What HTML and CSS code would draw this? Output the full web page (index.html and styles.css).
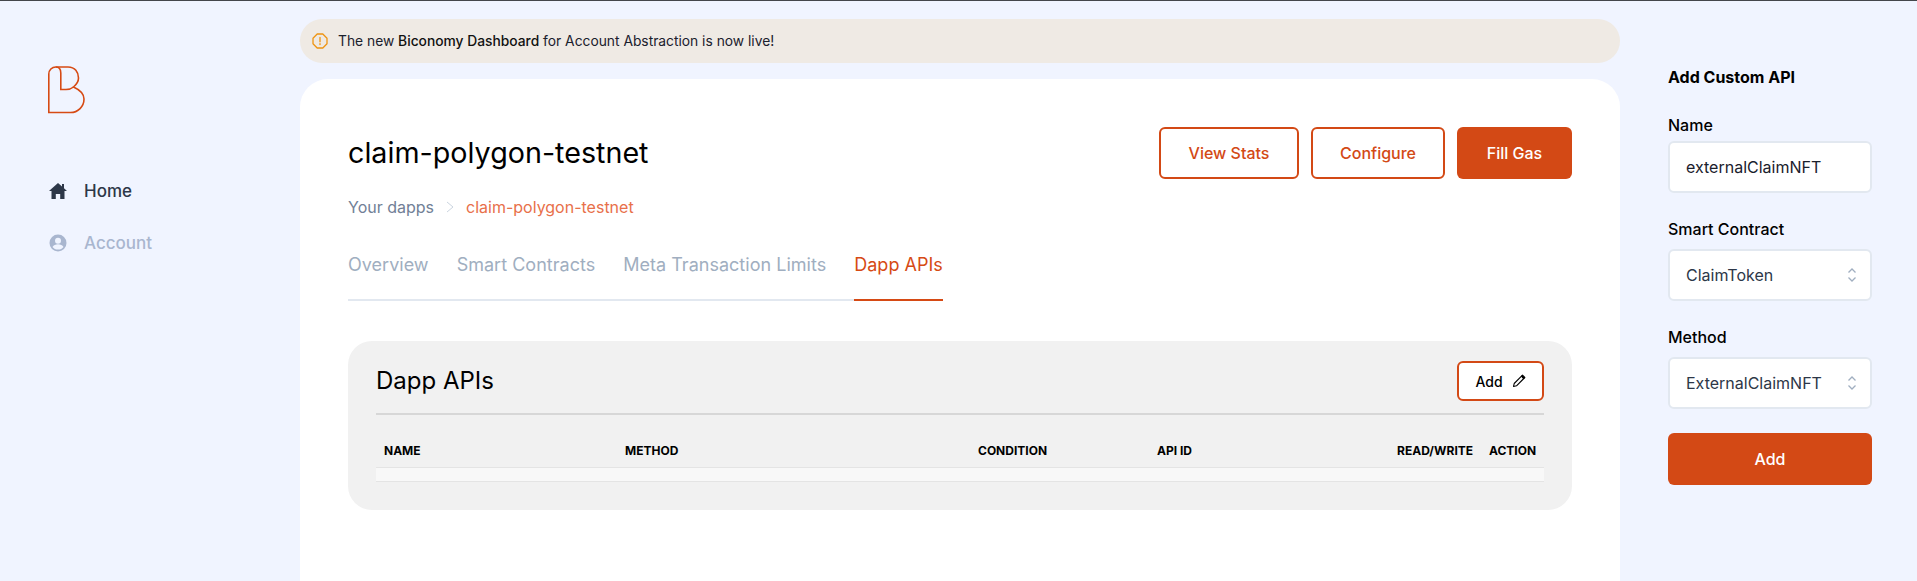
FILE: index.html
```html
<!DOCTYPE html>
<html lang="en">
<head>
<meta charset="utf-8">
<title>claim-polygon-testnet</title>
<link rel="stylesheet" href="styles.css">
</head>
<body>
<div class="app">
  <aside class="sidebar">
    <svg class="logo" width="37" height="48" viewBox="0 0 37 48" fill="none" stroke="#d64a14" stroke-width="1.600">
      <path d="M.8 46.500V8A7 7 0 0 1 7.800 1H20C27 1 30.500 6 30.500 12c0 3.500-1.700 6.200-5 9 5.500 2.500 10.500 6 10.500 12 0 7.500-6 13.500-13.500 13.500z"/>
      <path d="M7.800 1c3.500 0 5 2.500 5 6v16.500H18c3 0 5.500-.8 7.500-2.500"/>
    </svg>
    <nav class="nav">
      <a class="nav-item active">
        <svg width="18" height="16" viewBox="0 0 18 16"><path fill="#2d3748" d="M9 0 0 8h2.500v8h4.300v-5h4.400v5h4.300V8H18L15 5.300V1h-2v2.500z"/></svg>
        <span>Home</span>
      </a>
      <a class="nav-item">
        <svg width="18" height="18" viewBox="0 0 18 18"><circle cx="9" cy="9" r="8.500" fill="#a9b6cf"/><circle cx="9" cy="6.800" r="3" fill="#f0f4ff"/><path fill="#f0f4ff" d="M3.500 13c1-2 3-2.800 5.500-2.800s4.500.8 5.500 2.800c-1.200 1.600-3.200 2.600-5.500 2.600S4.700 14.600 3.500 13z"/></svg>
        <span>Account</span>
      </a>
    </nav>
  </aside>

  <main class="main">
    <div class="banner">
      <svg width="16" height="16" viewBox="0 0 16 16" fill="none" stroke="#ee9412" stroke-width="1.300"><path d="M5.200 1h5.600L15 5.200v5.600L10.800 15H5.200L1 10.800V5.200z" stroke-linejoin="round"/><path d="M8 4.500v4.300M8 10.700v.9" stroke-linecap="round"/></svg>
      <p>The new <strong>Biconomy Dashboard</strong> for Account Abstraction is now live!</p>
    </div>
    <section class="card">
      <header class="page-head">
        <h1>claim-polygon-testnet</h1>
        <div class="actions">
          <button class="btn outline view">View Stats</button>
          <button class="btn outline conf">Configure</button>
          <button class="btn solid fill">Fill Gas</button>
        </div>
      </header>
      <div class="crumbs">
        <span>Your dapps</span>
        <svg width="8" height="12" viewBox="0 0 8 12" fill="none" stroke="#cbd5e0" stroke-width="1"><path d="M1 1l6 5-6 5"/></svg>
        <span class="current">claim-polygon-testnet</span>
      </div>
      <div class="tabs">
        <a class="tab">Overview</a>
        <a class="tab">Smart Contracts</a>
        <a class="tab">Meta Transaction Limits</a>
        <a class="tab active">Dapp APIs</a>
      </div>
      <section class="panel">
        <div class="panel-head">
          <h2>Dapp APIs</h2>
          <button class="add-btn">Add
            <svg width="14" height="14" viewBox="0 0 14 14" fill="none" stroke="#000" stroke-width="1.100" stroke-linejoin="round"><path d="M1.500 12.500l.7-3L9.500 2.200l2.300 2.300-7.300 7.300z"/><path d="M10.500 1.200l2.300 2.300-1 1-2.300-2.300z" fill="#000"/></svg>
          </button>
        </div>
        <div class="thead">
          <span class="th c-name">Name</span>
          <span class="th c-method">Method</span>
          <span class="th c-cond">Condition</span>
          <span class="th c-api">API ID</span>
          <span class="th c-rw">Read/Write</span>
          <span class="th c-act">Action</span>
        </div>
        <div class="tbody"></div>
      </section>
    </section>
  </main>

  <aside class="form">
    <h3>Add Custom API</h3>
    <label class="label l-name">Name</label>
    <div class="field input">externalClaimNFT</div>
    <label class="label">Smart Contract</label>
    <div class="field select">ClaimToken
      <svg width="10" height="16" viewBox="0 0 10 16" fill="none" stroke="#a0aec0" stroke-width="1.300"><path d="M1.500 5.500 5 2l3.500 3.500M1.500 10.500 5 14l3.500-3.500"/></svg>
    </div>
    <label class="label">Method</label>
    <div class="field select">ExternalClaimNFT
      <svg width="10" height="16" viewBox="0 0 10 16" fill="none" stroke="#a0aec0" stroke-width="1.300"><path d="M1.500 5.500 5 2l3.500 3.500M1.500 10.500 5 14l3.500-3.500"/></svg>
    </div>
    <button class="btn solid submit">Add</button>
  </aside>
</div>
</body>
</html>
```

FILE: styles.css
```css
* { box-sizing: border-box; }
html, body { margin: 0; height: 100%; }
body {
  font-family: Inter, "Liberation Sans", sans-serif;
  background: #f0f4ff;
  color: #000;
  overflow: hidden;
}
.app {
  display: flex;
  height: 581px;
  border-top: 1px solid #44464b;
}
.sidebar { width: 300px; flex: none; padding: 65px 0 0 48px; }
.logo { display: block; }
.nav { margin-top: 64px; display: flex; flex-direction: column; gap: 26px; }
.nav-item {
  display: flex;
  align-items: center;
  gap: 17px;
  height: 26px;
  font-size: 17px;
  font-weight: 500;
  color: #a9b6cf;
}
.nav-item svg { width: 18px; flex: none; margin-left: 1px; }
.nav-item.active { color: #2d3748; }

.main { width: 1320px; flex: none; padding-top: 18px; display: flex; flex-direction: column; }
.banner {
  height: 44px;
  border-radius: 22px;
  background: #efeae4;
  display: flex;
  align-items: center;
  gap: 10px;
  padding-left: 12px;
  font-size: 13.8px;
  color: #1a202c;
}
.banner p { margin: 0; font-weight: 400; }
.banner strong { font-weight: 450; color: #111; }
.card {
  margin-top: 16px;
  flex: 1;
  background: #fff;
  border-radius: 28px 28px 0 0;
  padding: 47px 48px 0;
}
.page-head { display: flex; justify-content: space-between; align-items: center; height: 53px; }
h1 { margin: 0; font-size: 28.7px; line-height: 40px; font-weight: 400; }
.actions { display: flex; gap: 12px; }
.btn {
  height: 52px;
  border-radius: 6px;
  font: 450 16px Inter, sans-serif;
  cursor: pointer;
}
.outline { background: #fff; border: 2px solid #d34915; color: #d34915; }
.solid { background: #d34915; border: 0; color: #fff; }
.view { width: 140px; }
.conf { width: 134px; }
.fill { width: 115px; }
.crumbs {
  margin-top: 16px;
  display: flex;
  align-items: center;
  gap: 12px;
  font-size: 16px;
  line-height: 24px;
  color: #718096;
}
.crumbs .current { color: #e8704a; }
.tabs {
  margin-top: 29px;
  display: flex;
  gap: 28px;
  width: 595px;
  height: 53px;
  border-bottom: 2px solid #e2e8f0;
}
.tab { font-size: 18px; letter-spacing: 0.02px; line-height: 24px; padding-top: 5px; height: 53px; color: #a0aec0; white-space: nowrap; }
.tab.active { color: #d64a14; border-bottom: 2px solid #d64a14; }
.panel {
  margin-top: 40px;
  height: 169px;
  background: #f1f1f1;
  border-radius: 24px;
  padding: 20px 28px 0;
}
.panel-head {
  display: flex;
  justify-content: space-between;
  align-items: flex-start;
  height: 54px;
  padding-bottom: 12px;
  border-bottom: 2px solid #d7d7d7;
}
h2 { margin: 0; font-size: 24px; font-weight: 400; line-height: 40px; }
.add-btn {
  width: 87px;
  height: 40px;
  background: #fff;
  border: 2px solid #d34915;
  border-radius: 6px;
  font: 450 14px Inter, sans-serif;
  color: #000;
  display: flex;
  align-items: center;
  justify-content: center;
  gap: 9px;
  padding: 0;
}
.thead { position: relative; height: 53px; border-bottom: 1px solid #e4e4e4; }
.th { position: absolute; top: 28px; font-size: 12px; line-height: 15px; font-weight: 700; text-transform: uppercase; }
.c-name { left: 8px; }
.c-method { left: 249px; }
.c-cond { left: 602px; }
.c-api { left: 781px; }
.c-rw { left: 1021px; }
.c-act { left: 1113px; }
.tbody { height: 14px; background: #f8f8f8; border-bottom: 1px solid #e4e4e4; }

.form { width: 204px; margin-left: 48px; flex: none; padding-top: 66px; display: flex; flex-direction: column; }
h3 { margin: 0; font-size: 16px; line-height: 20px; font-weight: 700; }
.label { margin-top: 26px; font-size: 16px; line-height: 20px; font-weight: 500; height: 30px; }
.l-name { margin-top: 28px; height: 26px; }
.field {
  height: 52px;
  background: #fff;
  border: 2px solid #e2e8f0;
  border-radius: 6px;
  display: flex;
  align-items: center;
  justify-content: space-between;
  padding: 0 13px 0 16px;
  font-size: 16px;
  color: #2d3748;
}
.input { color: #1a202c; }
.submit { margin-top: 24px; width: 204px; }
```
